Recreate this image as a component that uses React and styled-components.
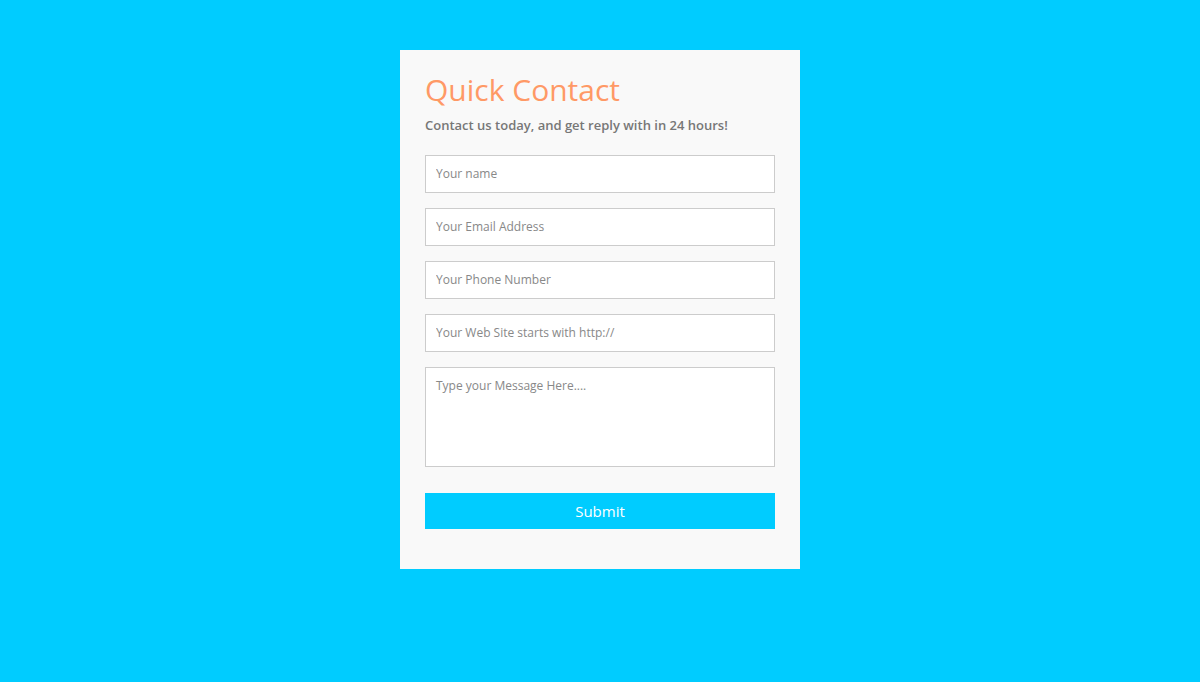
import styled, { createGlobalStyle } from "styled-components"

const GlobalStyle = createGlobalStyle`
  html, body {
    margin: 0;
    padding: 0;
    background: #00ccff;
    font-family: "Open Sans", "Liberation Sans", sans-serif;
  }
`

const Page = styled.div`
  min-height: 682px;
  padding-top: 50px;
  box-sizing: border-box;
`

const Card = styled.form`
  width: 400px;
  margin: 0 auto;
  background: #f9f9f9;
  padding: 20px 25px 40px;
  box-sizing: border-box;
  display: flex;
  flex-direction: column;
`

const Title = styled.h2`
  margin: 0;
  font-size: 30px;
  line-height: 40px;
  font-weight: 400;
  color: #ff9966;
`

const Subtitle = styled.p`
  margin: 6px 0 21px;
  font-size: 13px;
  line-height: 18px;
  font-weight: 600;
  color: #777;
`

const Fields = styled.div`
  display: flex;
  flex-direction: column;
  gap: 15px;
`

const Input = styled.input`
  width: 100%;
  height: 38px;
  box-sizing: border-box;
  border: 1px solid #ccc;
  background: #fff;
  padding: 0 10px 2px;
  font-family: inherit;
  font-size: 12px;
  color: #555;
  outline: none;

  &::placeholder {
    color: #888;
  }
`

const Message = styled.textarea`
  width: 100%;
  height: 100px;
  box-sizing: border-box;
  border: 1px solid #ccc;
  background: #fff;
  padding: 9px 10px;
  font-family: inherit;
  font-size: 12px;
  line-height: 18px;
  resize: none;
  outline: none;
  display: block;

  &::placeholder {
    color: #888;
  }
`

const Submit = styled.button`
  margin-top: 26px;
  height: 36px;
  border: none;
  background: #00ccff;
  color: #fff;
  font-family: inherit;
  font-size: 15px;
  cursor: pointer;
`

const fields = [
  "Your name",
  "Your Email Address",
  "Your Phone Number",
  "Your Web Site starts with http://",
]

export default function App() {
  return (
    <>
      <GlobalStyle />
      <Page>
        <Card onSubmit={(e) => e.preventDefault()}>
          <Title>Quick Contact</Title>
          <Subtitle>Contact us today, and get reply with in 24 hours!</Subtitle>
          <Fields>
            {fields.map((f) => (
              <Input key={f} placeholder={f} />
            ))}
            <Message placeholder="Type your Message Here...." />
          </Fields>
          <Submit type="submit">Submit</Submit>
        </Card>
      </Page>
    </>
  )
}
